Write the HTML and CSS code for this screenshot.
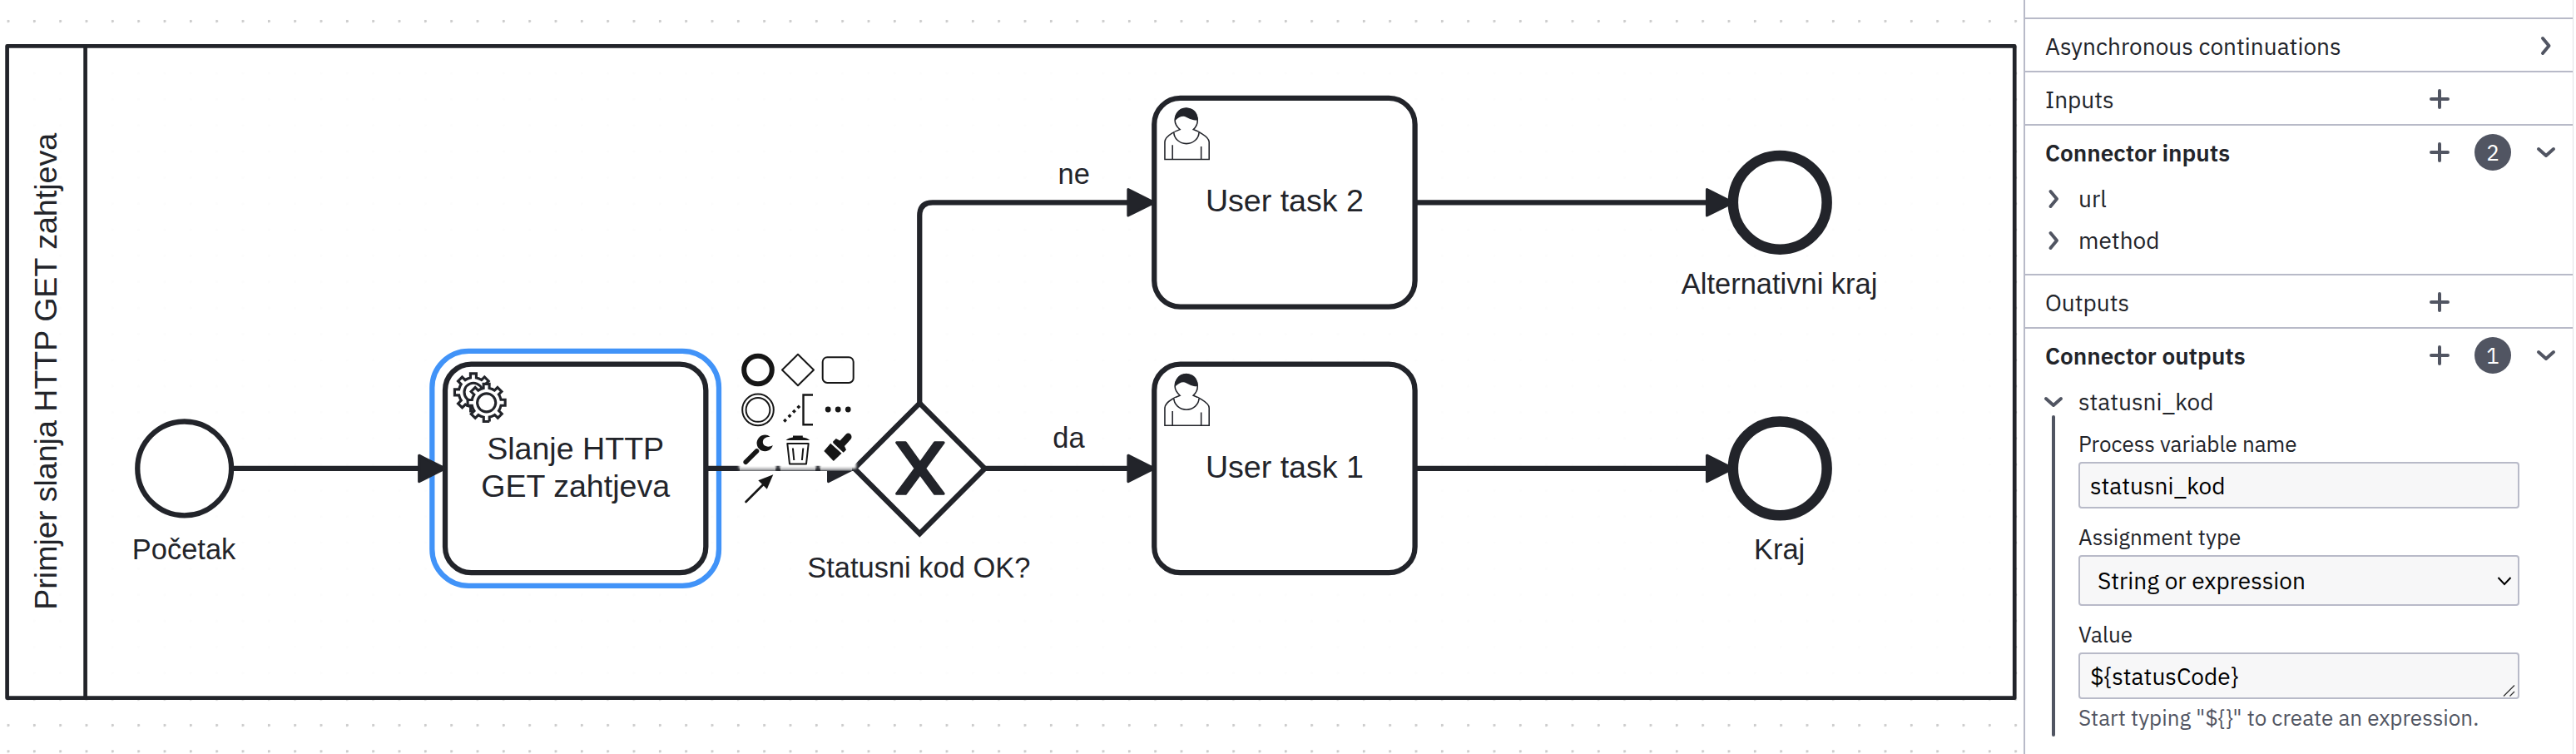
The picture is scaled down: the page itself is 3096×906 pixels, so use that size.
FILE: index.html
```html
<!DOCTYPE html>
<html lang="hr">
<head>
<meta charset="utf-8">
<title>Primjer slanja HTTP GET zahtjeva</title>
<link rel="stylesheet" href="styles.css">
</head>
<body>
<div class="modeler">
<main class="canvas">
<svg class="diagram" width="2432" height="906" viewBox="0 0 2432 906">
  <defs>
    <pattern id="grid" width="10" height="10" patternUnits="userSpaceOnUse"><circle class="dot" cx="0.4" cy="0.5" r="0.55"/></pattern>
    <marker id="arrow" viewBox="0 0 20 20" refX="11" refY="10" markerWidth="10" markerHeight="10" orient="auto"><path class="arrow-head" d="M1 5 L11 10 L1 15 Z"/></marker>
    <filter id="soft" x="-20%" y="-20%" width="140%" height="140%"><feGaussianBlur stdDeviation="1.6"/></filter>
    <path id="gear" d="m12,18 v-1.71335 c0.352326,-0.0705 0.703932,-0.17838 1.047628,-0.32133 0.344416,-0.14465 0.665822,-0.32133 0.966377,-0.52145 l1.19431,1.18005 1.567487,-1.57688 -1.195028,-1.18014 c0.403376,-0.61394 0.683079,-1.29908 0.825447,-2.01824 l1.622133,-0.01 v-2.2196 l-1.636514,0.01 c-0.07333,-0.35153 -0.178319,-0.70024 -0.323564,-1.04372 -0.145244,-0.34406 -0.321407,-0.6644 -0.522735,-0.96217 l1.131035,-1.13631 -1.583305,-1.56293 -1.129598,1.13589 c-0.614052,-0.40108 -1.302883,-0.68093 -2.022633,-0.82247 l0.0093,-1.61852 h-2.241173 l0.0042,1.63124 c-0.353763,0.0736 -0.705369,0.17977 -1.049785,0.32371 -0.344415,0.14437 -0.665102,0.32092 -0.9635006,0.52046 l-1.1698628,-1.15823 -1.5667691,1.5792 1.1684265,1.15669 c-0.4026573,0.61283 -0.68308,1.29797 -0.8247287,2.01713 l-1.6588041,0.003 v2.22174 l1.6724648,-0.006 c0.073327,0.35077 0.1797598,0.70243 0.3242851,1.04472 0.1452428,0.34448 0.3214064,0.6644 0.5227339,0.96066 l-1.1993431,1.19723 1.5840256,1.56011 1.1964668,-1.19348 c0.6140517,0.40346 1.3028827,0.68232 2.0233517,0.82331 l7.19e-4,1.69892 h2.226848 z m0.221462,-3.9957 c-1.788948,0.7502 -3.8576,-0.0928 -4.6097055,-1.87438 -0.7521065,-1.78321 0.090598,-3.84627 1.8802645,-4.59604 1.78823,-0.74936 3.856881,0.0929 4.608987,1.87437 0.752106,1.78165 -0.0906,3.84612 -1.879546,4.59605 z"/>
    <g id="user">
      <path class="user-line" d="m15,12 c0.909,-0.845 1.594,-2.049 1.594,-3.385 0,-2.554 -1.805,-4.622 -4.357,-4.622 -2.552,0 -4.288,2.068 -4.288,4.622 0,1.348 0.974,2.562 1.896,3.405 -0.529,0.187 -5.669,2.097 -5.794,4.756 v6.718 h17 v-6.718 c0,-2.298 -5.528,-4.595 -6.051,-4.776z m-8,6 l0,5.5 m11,0 l0,-5"/>
      <path class="user-line" d="m15,12 m2.162,1.009 c0,2.447 -2.158,4.431 -4.821,4.431 -2.665,0 -4.822,-1.981 -4.822,-4.431"/>
      <path class="user-hair" d="m15,12 m-6.9,-3.8 c0,0 2.251,-2.358 4.274,-1.177 2.024,1.181 4.221,1.537 4.124,0.965 -0.098,-0.57 -0.117,-3.791 -4.191,-4.136 -3.572,0.001 -4.208,3.367 -4.208,4.348z"/>
    </g>
  </defs>
  <g transform="translate(8.6 55.3) scale(3.1333)">
    <rect x="-10" y="-20" width="800" height="300" fill="url(#grid)"/>
    <rect class="pool" width="770" height="250"/>
    <path class="pool-line" d="M30 0V250"/>
    <text class="task-text" transform="translate(18.8 124.8) rotate(-90)">Primjer slanja HTTP GET zahtjeva</text>

    <rect class="selection" x="163" y="117" width="110" height="90" rx="14"/>
    <rect class="shape" x="168" y="122" width="100" height="80" rx="10"/>
    <rect class="shape" x="440" y="20" width="100" height="80" rx="10"/>
    <rect class="shape" x="440" y="122" width="100" height="80" rx="10"/>
    <path class="shape" d="M350 137 L375 162 L350 187 L325 162Z"/>
    <circle class="shape" cx="68" cy="162" r="18"/>
    <circle class="end" cx="680" cy="60" r="18"/>
    <circle class="end" cx="680" cy="162" r="18"/>

    <path class="flow" d="M86 162H168"/>
    <path class="flow" d="M268 162H325"/>
    <path class="flow" d="M375 162H440"/>
    <path class="flow" d="M350 137V65Q350 60 355 60H440"/>
    <path class="flow" d="M540 60H662"/>
    <path class="flow" d="M540 162H662"/>

    <path class="gate-x" d="M341.2 141.8h3.4l5.6 7.8 5.6-7.8h3.4l-7.2 9.9 7.2 9.7h-3.4l-5.6-7.6-5.6 7.6h-3.4l7.2-9.7z" transform="translate(0 10.3)"/>
    <g class="gear" transform="translate(168 122)"><use href="#gear"/><circle class="gear-hub" cx="15.9" cy="14.8" r="4.5"/><use href="#gear" x="5" y="4"/></g>
    <use href="#user" x="440" y="20"/>
    <use href="#user" x="440" y="122"/>

    <text class="task-text" x="218" y="158.5">Slanje HTTP</text>
    <text class="task-text" x="218" y="172.9">GET zahtjeva</text>
    <text class="task-text" x="490" y="63.4">User task 2</text>
    <text class="task-text" x="490" y="165.5">User task 1</text>
    <text class="label" x="67.8" y="196.8">Početak</text>
    <text class="label" x="349.7" y="203.8">Statusni kod OK?</text>
    <text class="label" x="409.2" y="53">ne</text>
    <text class="label" x="407.2" y="154.2">da</text>
    <text class="label" x="679.8" y="95">Alternativni kraj</text>
    <text class="label" x="679.8" y="196.8">Kraj</text>
  </g>
  <g class="pad">
    <g filter="url(#soft)">
      <rect class="pad-tile" x="888" y="520" width="45" height="43"/>
      <rect class="pad-tile" x="888" y="567" width="45" height="43"/>
      <rect class="pad-tile" x="937" y="520" width="44" height="43"/>
      <rect class="pad-tile" x="985" y="520" width="44" height="43"/>
    </g>
    <path class="veil" d="M889 563.5H932M938 563.5H980M986 563.5H1024"/>
    <circle class="pad-thick" cx="911" cy="444.5" r="16.8"/>
    <path class="pad-line" d="M959 425.8 L978 444.5 L959 463.2 L940 444.5Z"/>
    <rect class="pad-line" x="988.7" y="429.3" width="37" height="30.6" rx="5.5"/>
    <circle class="pad-line" cx="911" cy="492.4" r="18.8"/>
    <circle class="pad-line" cx="911" cy="492.4" r="14.4"/>
    <path class="pad-line bracket" d="M977 474.5H965.5V510.3H977"/>
    <path class="pad-fill" d="M943.5 502.7l2.5 2.5-2.5 2.5-2.5-2.5zM949 497.2l2.5 2.5-2.5 2.5-2.5-2.5zM954.4 491.8l2.5 2.5-2.5 2.5-2.5-2.5zM959.8 486.5l2.5 2.5-2.5 2.5-2.5-2.5z"/>
    <circle class="pad-fill" cx="995.2" cy="492" r="3.4"/><circle class="pad-fill" cx="1007.2" cy="492" r="3.4"/><circle class="pad-fill" cx="1019.2" cy="492" r="3.4"/>
    <path class="wrench-handle" d="M896.2 555.3L909.5 542"/>
    <path class="pad-fill" d="M925.5 524.8a9.8 9.8 0 1 0 3.3 10.2c-3 1.800-6.900 2.300-9.500.6-3.300-2.300-3-6.600-.6-8.600 1.900-1.600 4.300-1.900 6.800-2.200z"/>
    <path class="pad-fill" d="M944.5 529c3-2.400 5-2.800 8.500-3.500v-2h11.800v2c3.500.7 5.500 1.100 8.500 3.500z"/>
    <path class="pad-line" d="M946.3 533H971.7L969 557.500H949Z"/><path class="pad-line" d="M952.900 538.500L954.300 553M965.300 538.500L963.900 553"/>
    <path class="pad-fill" d="M1001.200 530.500L1004.800 527L1009.500 529.600L1017 521.500C1020.500 518.500 1025.500 523.500 1022.700 527.500L1015 536L1017 540.500L1013.500 544C1009 541 1005 537 1001.200 533Z"/>
    <path class="pad-fill" d="M998.200 532.800L1011.500 544.800L1001.800 554L990.300 542Z"/>
    <path class="gap" d="M999.500 531.500L1013.500 544.500"/>
    <path class="arrow-shaft" d="M896.500 603L918 581.500"/>
    <path class="pad-fill" d="M929.300 570.300L921.800 587.800L911.300 577.300Z"/>
  </g>
</svg>
</main>
<aside class="panel">
  <div class="group first"></div>
  <section class="group"><header class="head"><span class="title">Asynchronous continuations</span><svg class="ico col4" viewBox="0 0 24 24"><path d="M8 3L15.500 12L8 21"/></svg></header></section>
  <section class="group"><header class="head"><span class="title">Inputs</span><svg class="ico col2" viewBox="0 0 24 24"><path d="M12 2V22M2 12H22"/></svg></header></section>
  <section class="group"><header class="head"><span class="title bold">Connector inputs</span><svg class="ico col2" viewBox="0 0 24 24"><path d="M12 2V22M2 12H22"/></svg><span class="badge">2</span><svg class="ico col4" viewBox="0 0 24 24"><path d="M3 8L12 16L21 8"/></svg></header>
    <div class="items">
      <div class="item"><svg class="ico" viewBox="0 0 24 24"><path d="M8.500 3L16 12L8.500 21"/></svg><span>url</span></div>
      <div class="item"><svg class="ico" viewBox="0 0 24 24"><path d="M8.500 3L16 12L8.500 21"/></svg><span>method</span></div>
    </div>
  </section>
  <section class="group"><header class="head"><span class="title">Outputs</span><svg class="ico col2" viewBox="0 0 24 24"><path d="M12 2V22M2 12H22"/></svg></header></section>
  <section class="group"><header class="head"><span class="title bold">Connector outputs</span><svg class="ico col2" viewBox="0 0 24 24"><path d="M12 2V22M2 12H22"/></svg><span class="badge">1</span><svg class="ico col4" viewBox="0 0 24 24"><path d="M3 8L12 16L21 8"/></svg></header>
    <div class="items">
      <div class="item"><svg class="ico" viewBox="0 0 24 24"><path d="M3 8L12 16L21 8"/></svg><span>statusni_kod</span></div>
      <div class="entry">
        <div class="rail"></div>
        <div class="fields">
          <div class="field"><div class="name">Process variable name</div><div class="control"><span>statusni_kod</span></div></div>
          <div class="field"><div class="name">Assignment type</div><div class="control select"><span>String or expression</span><svg class="caret" viewBox="0 0 20 14"><path d="M2.500 3L10 11L17.500 3"/></svg></div></div>
          <div class="field"><div class="name">Value</div><div class="control area"><span class="value">${statusCode}</span><svg class="grip" viewBox="0 0 16 16"><path d="M1 14.500L14 1.500M8.500 14.500L14 9"/></svg></div><div class="hint">Start typing "${}" to create an expression.</div></div>
        </div>
      </div>
    </div>
  </section>
</aside>
</div>
</body>
</html>
```
FILE: styles.css
```css
* { box-sizing: border-box; }
body { margin: 0; background: #fff; overflow: hidden; }
.modeler { display: flex; width: 3096px; height: 906px; }
.canvas { width: 2432px; flex: none; }
.diagram { display: block; font-family: "Liberation Sans", Arial, sans-serif; }
.dot { fill: #ccc; }
.pool { fill: #fff; fill-opacity: .95; stroke: #22242a; stroke-width: 1.5; stroke-linejoin: round; }
.pool-line { stroke: #22242a; stroke-width: 1.5; }
.shape { fill: #fff; stroke: #22242a; stroke-width: 2; }
.end { fill: #fff; stroke: #22242a; stroke-width: 4; }
.selection { fill: none; stroke: #4193f8; stroke-width: 2; }
.flow { fill: none; stroke: #22242a; stroke-width: 2; marker-end: url(#arrow); }
.arrow-head { fill: #22242a; stroke: #22242a; stroke-width: 1; stroke-linecap: round; stroke-linejoin: round; }
.gate-x { fill: #22242a; stroke: #22242a; stroke-width: 1; stroke-linejoin: round; }
.gear { fill: #fff; stroke: #22242a; stroke-width: 1; }
.gear-hub { stroke: none; }
.user-line { fill: #fff; stroke: #22242a; stroke-width: .5; }
.user-hair { fill: #22242a; stroke: #22242a; stroke-width: .5; }
.task-text { font-size: 12px; fill: #22242a; text-anchor: middle; }
.label { font-size: 11px; fill: #22242a; text-anchor: middle; }
.pad-tile { fill: #fff; }
.veil { stroke: #fff; stroke-opacity: .5; stroke-width: 4; }
.pad-line { fill: none; stroke: #161616; stroke-width: 2; stroke-linejoin: round; }
.bracket { stroke-width: 2.4; stroke-linejoin: miter; }
.pad-thick { fill: none; stroke: #161616; stroke-width: 6; }
.pad-fill { fill: #161616; }
.wrench-handle { stroke: #161616; stroke-width: 5.6; stroke-linecap: round; }
.arrow-shaft { stroke: #161616; stroke-width: 2.6; stroke-linecap: round; }
.gap { stroke: #fff; stroke-width: 1.2; }

.panel { width: 661px; flex: none; border-left: 2px solid #b8bac8; border-right: 1px solid #e2e2e5; font-family: "IBM Plex Sans", Roboto, sans-serif; font-size: 28px; color: #22242a; background: #fff; }
.group { border-top: 2px solid #b8bac8; }
.group.first { height: 21px; border: 0; }
.head { height: 62px; display: grid; grid-template-columns: 1fr 64px 64px 64px; align-items: center; padding: 2px 0 0 24px; }
.title { padding-top: 1px; }
.bold { font-weight: 600; }
.ico { width: 24px; height: 24px; fill: none; stroke: #515562; stroke-width: 4; stroke-linecap: round; stroke-linejoin: round; justify-self: center; }
.col2 { grid-column: 2; }
.col4 { grid-column: 4; }
.badge { grid-column: 3; justify-self: center; width: 44px; height: 44px; border-radius: 50%; background: #515562; color: #fff; font-size: 26px; line-height: 45px; text-align: center; }
.items { padding: 1px 0 15px; }
.item { height: 50px; display: flex; align-items: center; gap: 18px; padding-left: 22px; }
.item span { padding-bottom: 2px; }
.entry { display: flex; margin: -9px 0 0 32px; height: 386px; }
.rail { width: 4px; border-radius: 2px; background: #515562; }
.fields { width: 558px; padding: 18px 0 0 28px; display: flex; flex-direction: column; gap: 18px; }
.name { font-size: 26px; line-height: 32px; margin-bottom: 6px; }
.control { height: 56px; border: 2px solid #b8bac8; border-radius: 4px; background: #f7f7f8; color: #000; display: flex; align-items: center; justify-content: space-between; padding: 0 6px 0 12px; }
.select { height: 61px; padding-left: 21px; }
.caret { width: 20px; height: 14px; fill: none; stroke: #000; stroke-width: 2; }
.area { padding-right: 2px; }
.grip { width: 16px; height: 16px; align-self: flex-end; fill: none; stroke: #333; stroke-width: 1.3; }
.hint { font-size: 26px; line-height: 32px; margin-top: 6px; color: #515562; }
```
